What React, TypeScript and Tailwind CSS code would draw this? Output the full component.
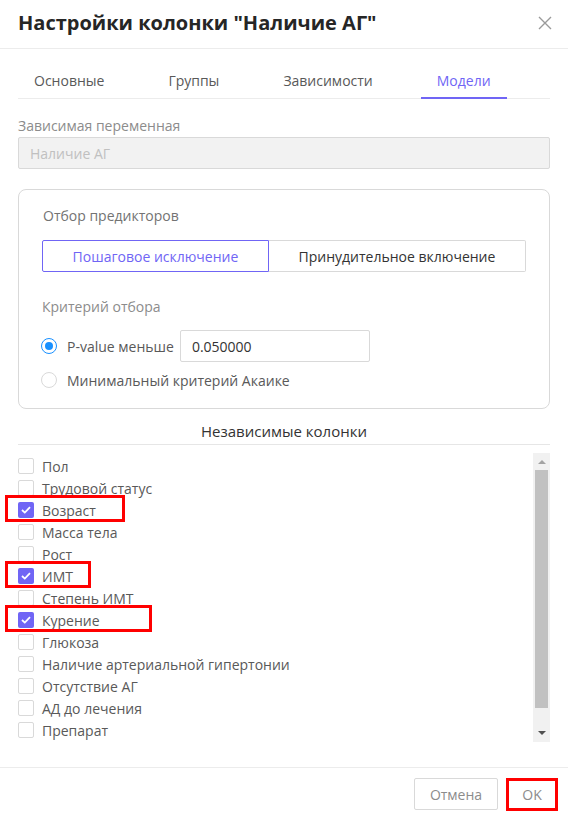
import React from "react";

const items: { label: string; checked?: boolean; mark?: number }[] = [
  { label: "Пол" },
  { label: "Трудовой статус" },
  { label: "Возраст", checked: true, mark: 120 },
  { label: "Масса тела" },
  { label: "Рост" },
  { label: "ИМТ", checked: true, mark: 86 },
  { label: "Степень ИМТ" },
  { label: "Курение", checked: true, mark: 147 },
  { label: "Глюкоза" },
  { label: "Наличие артериальной гипертонии" },
  { label: "Отсутствие АГ" },
  { label: "АД до лечения" },
  { label: "Препарат" },
];

const tabs = ["Основные", "Группы", "Зависимости", "Модели"];

export default function App() {
  return (
    <div
      className="w-[568px] h-[816px] bg-white flex flex-col text-[14px] text-[#595959]"
      style={{ fontFamily: '"Open Sans", "Noto Sans", sans-serif' }}
    >
      {/* header */}
      <div className="h-[49px] shrink-0 border-b border-[#ececec] flex items-center justify-between pl-[18px] pr-[16px]">
        <div className="text-[20px] font-bold text-[#262626] leading-[28px] -mt-[2px]">
          Настройки колонки "Наличие АГ"
        </div>
        <svg width="14" height="14" viewBox="0 0 14 14" className="-mt-[2px]">
          <path d="M1 1L13 13M13 1L1 13" stroke="#9a9a9a" strokeWidth="1.4" />
        </svg>
      </div>

      <div className="px-[18px] pt-[13px] flex flex-col flex-1 min-h-0">
        {/* tabs */}
        <div className="h-[37px] border-b border-[#ececec] flex gap-[32px]">
          {tabs.map((t, i) => (
            <div
              key={t}
              className={
                "relative px-4 h-[36px] flex items-center " +
                (i === 3 ? "text-[#7065f5]" : "text-[#595959]")
              }
            >
              {t}
              {i === 3 && (
                <div className="absolute left-0 right-0 bottom-[-1px] h-[2px] bg-[#7065f5]" />
              )}
            </div>
          ))}
        </div>

        {/* dependent variable */}
        <div className="mt-[17px] leading-[20px] text-[#8c8c8c]">Зависимая переменная</div>
        <div className="mt-[1px] h-[32px] rounded-[2px] border border-[#d9d9d9] bg-[#f2f2f2] flex items-center px-[11px] text-[#c0c0c0]">
          Наличие АГ
        </div>

        {/* card */}
        <div className="mt-[20px] h-[220px] rounded-[8px] border border-[#d9d9d9] px-[23px] pt-[16px]">
          <div className="leading-[20px] pl-[1px] text-[#737373]">Отбор предикторов</div>
          <div className="mt-[14px] h-[32px] flex">
            <div className="flex-auto flex items-center justify-center border border-[#7065f5] text-[#7065f5] rounded-l-[2px]">
              Пошаговое исключение
            </div>
            <div className="flex-auto flex items-center justify-center border border-l-0 border-[#d9d9d9] text-[#333] rounded-r-[2px]">
              Принудительное включение
            </div>
          </div>
          <div className="mt-[25px] leading-[20px] text-[#8c8c8c]">Критерий отбора</div>
          <div className="mt-[13px] flex items-center h-[32px] -ml-[1px]">
            <div className="w-[16px] h-[16px] rounded-full border border-[#1890ff] flex items-center justify-center">
              <div className="w-[8px] h-[8px] rounded-full bg-[#1890ff]" />
            </div>
            <span className="ml-[10px] text-[#595959]">P-value меньше</span>
            <div className="ml-[6px] w-[190px] h-[32px] border border-[#d9d9d9] rounded-[2px] flex items-center px-[11px] text-[#333]">
              0.050000
            </div>
          </div>
          <div className="mt-[7px] flex items-center h-[22px] -ml-[1px]">
            <div className="w-[16px] h-[16px] rounded-full border border-[#d9d9d9]" />
            <span className="ml-[10px] text-[#595959]">Минимальный критерий Акаике</span>
          </div>
        </div>

        {/* independent columns */}
        <div className="mt-[12px] leading-[20px] text-center text-[15px] text-[#333]">
          Независимые колонки
        </div>
        <div className="mt-[3px] border-b border-[#e6e6e6]" />

        <div className="mt-[8px] h-[289px] flex">
          <div className="flex-1 pt-[2px]">
            {items.map((it) => (
              <div key={it.label} className="relative h-[22px] flex items-center">
                {it.checked ? (
                  <div className="w-[16px] h-[16px] rounded-[2px] bg-[#7065f5] flex items-center justify-center">
                    <svg width="10" height="8" viewBox="0 0 10 8">
                      <path d="M1 4L3.8 6.6L9 1.2" fill="none" stroke="white" strokeWidth="1.8" />
                    </svg>
                  </div>
                ) : (
                  <div className="w-[16px] h-[16px] rounded-[2px] border border-[#d9d9d9] bg-white" />
                )}
                <span className="ml-[8px] text-[#595959]">{it.label}</span>
                {it.mark && (
                  <div
                    className="absolute left-[-13px] top-[-4px] h-[27px] border-[3px] border-[#ff0000]"
                    style={{ width: it.mark }}
                  />
                )}
              </div>
            ))}
          </div>
          {/* scrollbar */}
          <div className="w-[17px] bg-[#f1f1f1] flex flex-col items-center">
            <div className="h-[17px] flex items-center justify-center">
              <svg width="8" height="5" viewBox="0 0 8 5">
                <path d="M0 5L4 1L8 5Z" fill="#a3a3a3" />
              </svg>
            </div>
            <div className="w-[13px] h-[238px] bg-[#c1c1c1]" />
            <div className="flex-1" />
            <div className="h-[17px] flex items-center justify-center">
              <svg width="8" height="5" viewBox="0 0 8 5">
                <path d="M0 0L8 0L4 4Z" fill="#505050" />
              </svg>
            </div>
          </div>
        </div>

        <div className="flex-1" />
      </div>

      {/* footer */}
      <div className="h-[49px] shrink-0 border-t border-[#ececec] flex justify-end items-start pt-[10px] pr-[10px] gap-[8px]">
        <div className="w-[84px] h-[32px] border border-[#d9d9d9] rounded-[2px] flex items-center justify-center text-[#8c8c8c]">
          Отмена
        </div>
        <div className="w-[52px] h-[33px] border-[3px] border-[#ff0000] flex items-center justify-center text-[#8c8c8c]">
          OK
        </div>
      </div>
    </div>
  );
}
